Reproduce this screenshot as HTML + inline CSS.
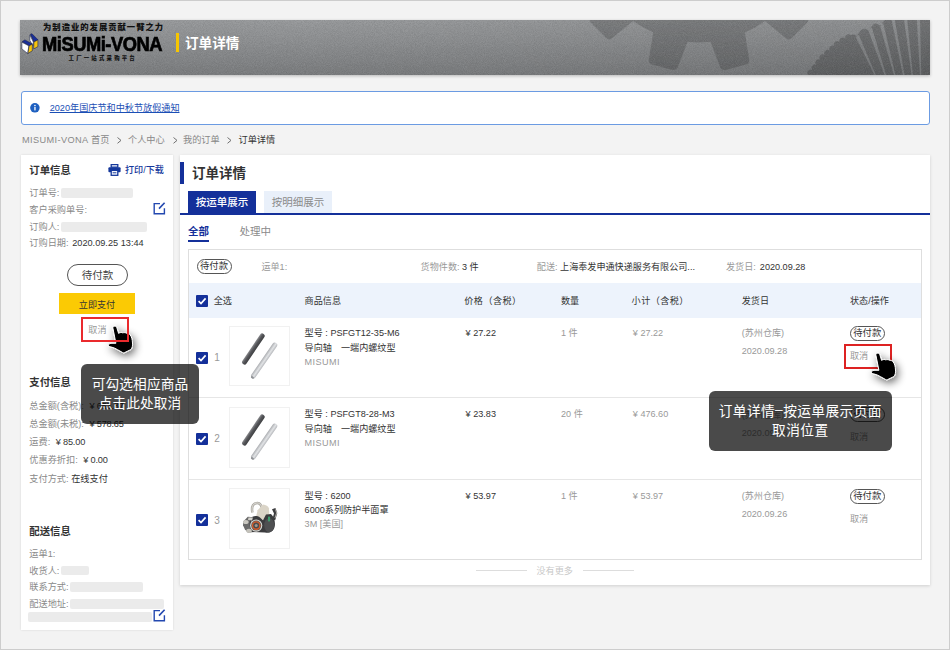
<!DOCTYPE html>
<html lang="zh-CN">
<head>
<meta charset="utf-8">
<title>订单详情</title>
<style>
*{box-sizing:border-box;margin:0;padding:0}
html,body{width:950px;height:650px;overflow:hidden;background:#f3f3f3}
body{font-family:"Liberation Sans","Noto Sans CJK SC",sans-serif;font-size:9.3px;color:#333;position:relative}
#frame{position:absolute;left:0;top:0;width:950px;height:650px;border:1px solid #cdcdcd;background:#f3f3f3}
.a{position:absolute;white-space:nowrap}
.l{font-size:1em}
/* header */
#hdr{left:20px;top:20px;width:910px;height:55px;background:linear-gradient(90deg,rgba(0,0,0,0) 30%,rgba(0,0,0,.07) 100%),linear-gradient(180deg,#97999b 0%,#8a8c8e 45%,#797b7d 100%);box-shadow:0 1px 3px rgba(0,0,0,.25);overflow:hidden}
#hdr svg{position:absolute;left:0;top:0}
.tag{left:43px;top:21.5px;font-size:8.3px;line-height:10px;font-weight:900;letter-spacing:1.02px;color:#111}
.brand{left:42px;top:32px;font-size:19.6px;line-height:24px;font-weight:700;color:#000;letter-spacing:-.5px;transform-origin:0 50%;transform:scaleX(.935);-webkit-text-stroke:.7px #000}
.sub{left:68.6px;top:53.8px;font-size:5.4px;line-height:8px;font-weight:900;letter-spacing:2.2px;color:#111}
.ybar{left:176px;top:33px;width:3px;height:19px;background:#f7c600}
.htitle{left:185px;top:33.6px;font-size:13.6px;line-height:19px;font-weight:700;color:#fff}
/* notice */
#notice{left:21px;top:91px;width:909px;height:34px;background:#fff;border:1px solid #6b9be2;border-radius:3px}
.ni{left:29.5px;top:102px;width:10px;height:10px;border-radius:50%;background:#1d5fc4}
.nlink{left:49.7px;top:101.3px;font-size:9.15px;line-height:14px;color:#1b4fb5;text-decoration:underline}
.bc{top:133px;font-size:9.2px;line-height:14px;color:#888}
/* panels */
#side{left:21px;top:155px;width:152px;height:475px;background:#fff;box-shadow:0 0 2px rgba(0,0,0,.12)}
#main{left:180px;top:155px;width:750px;height:430px;background:#fff;box-shadow:0 1px 3px rgba(0,0,0,.15)}
.h3{font-size:10.4px;line-height:14px;font-weight:700;color:#333}
.lb{font-size:9.2px;line-height:14px;color:#8a8a8a}
.v{color:#333}
.ph{background:#ebebeb;border-radius:2px}
.pill{border:1px solid #555;text-align:center;color:#444;background:#fff}

.bbar{left:180px;top:162px;width:4px;height:21.5px;background:#14309a}
.tab{top:191px;height:22.5px;width:68px;text-align:center;font-size:10.5px;line-height:22px}
.t12{font-size:9.1px;line-height:14px}
.g{color:#999}
.d{color:#333}
.cb{width:12px;height:12px;background:#14309a;border-radius:1px}
.cb svg{position:absolute;left:0;top:0}
.pbox{left:229px;width:60.5px;height:60.5px;border:1px solid #f1f1f1;background:#fff}
.spill{width:36px;height:15px;border-radius:8px;font-size:9.3px;line-height:13px;border:1px solid #555;text-align:center;color:#333;background:#fff}
.sep{left:189px;width:732px;height:1px;background:#e6e6e6}
.tip{background:rgba(0,0,0,.71);border-radius:6px;color:#fff;text-align:center;font-size:13.7px;line-height:19.2px;letter-spacing:.1px}
</style>
</head>
<body>
<div id="frame"></div>

<!-- HEADER -->
<div id="hdr" class="a">
<svg width="910" height="55" viewBox="20 20 910 55"><filter id="nz" x="0" y="0" width="100%" height="100%"><feTurbulence type="fractalNoise" baseFrequency="1.1" numOctaves="2" seed="7" result="t"/><feColorMatrix type="matrix" values="0 0 0 0 1  0 0 0 0 1  0 0 0 0 1  1.6 0 0 0 -.62"/></filter><filter id="nz2" x="0" y="0" width="100%" height="100%"><feTurbulence type="fractalNoise" baseFrequency="1.1" numOctaves="2" seed="19"/><feColorMatrix type="matrix" values="0 0 0 0 0  0 0 0 0 0  0 0 0 0 0  1.6 0 0 0 -.62"/></filter><g id="gears"><path d="M744.9 -172.6L749.2 -199.4Q749.9 -203.4 746.0 -204.4L725.5 -209.9Q721.6 -210.9 720.2 -207.2L710.5 -181.8A112.0 112.0 0 0 0 687.5 -181.8L677.8 -207.2Q676.4 -210.9 672.5 -209.9L652.0 -204.4Q648.1 -203.4 648.8 -199.4L653.1 -172.6A112.0 112.0 0 0 0 633.1 -161.1L612.0 -178.2Q608.9 -180.7 606.1 -177.9L591.1 -162.9Q588.3 -160.1 590.8 -157.0L607.9 -135.9A112.0 112.0 0 0 0 596.4 -115.9L569.6 -120.2Q565.6 -120.9 564.6 -117.0L559.1 -96.5Q558.1 -92.6 561.8 -91.2L587.2 -81.5A112.0 112.0 0 0 0 587.2 -58.5L561.8 -48.8Q558.1 -47.4 559.1 -43.5L564.6 -23.0Q565.6 -19.1 569.6 -19.8L596.4 -24.1A112.0 112.0 0 0 0 607.9 -4.1L590.8 17.0Q588.3 20.1 591.1 22.9L606.1 37.9Q608.9 40.7 612.0 38.2L633.1 21.1A112.0 112.0 0 0 0 653.1 32.6L648.8 59.4Q648.1 63.4 652.0 64.4L672.5 69.9Q676.4 70.9 677.8 67.2L687.5 41.8A112.0 112.0 0 0 0 710.5 41.8L720.2 67.2Q721.6 70.9 725.5 69.9L746.0 64.4Q749.9 63.4 749.2 59.4L744.9 32.6A112.0 112.0 0 0 0 764.9 21.1L786.0 38.2Q789.1 40.7 791.9 37.9L806.9 22.9Q809.7 20.1 807.2 17.0L790.1 -4.1A112.0 112.0 0 0 0 801.6 -24.1L828.4 -19.8Q832.4 -19.1 833.4 -23.0L838.9 -43.5Q839.9 -47.4 836.2 -48.8L810.8 -58.5A112.0 112.0 0 0 0 810.8 -81.5L836.2 -91.2Q839.9 -92.6 838.9 -96.5L833.4 -117.0Q832.4 -120.9 828.4 -120.2L801.6 -115.9A112.0 112.0 0 0 0 790.1 -135.9L807.2 -157.0Q809.7 -160.1 806.9 -162.9L791.9 -177.9Q789.1 -180.7 786.0 -178.2L764.9 -161.1A112.0 112.0 0 0 0 744.9 -172.6Z" fill="#000" fill-opacity=".165"/><path d="M807.8 76L807.8 74.8A3.35 3.35 0 0 1 812.2 70.0A3.34 3.34 0 0 1 816.5 65.1A3.35 3.35 0 0 1 820.0 59.5A3.33 3.33 0 0 1 824.7 55.0A3.35 3.35 0 0 1 829.6 50.6A3.35 3.35 0 0 1 834.4 46.2A3.33 3.33 0 0 1 839.5 42.0A3.35 3.35 0 0 1 845.1 38.6A3.35 3.35 0 0 1 850.7 35.3L850.7 35.3Q854.1 33.2 857.1 36.6L858.5 33.6Q862.9 25.5 868.9 31.2L870.6 28.2Q874.8 20.1 880.4 26.2L882.1 23.1Q884.8 18.8 887.8 19.4L887.8 19L931 19L931 76ZM855.8 36.9L858.8 34.9L875.8 75.0L874.5 75.0ZM868.6 30.9L871.8 27.5L886.1 75.0L884.6 75.0ZM880.0 25.8L883.1 22.5L895.4 75.0L893.9 75.0ZM891.5 19.3L894.7 19.3L904.5 75.0L902.9 75.0ZM904.0 19.3L907.2 19.3L912.9 75.0L911.5 75.0ZM916.8 19.3L920.0 19.3L921.3 75.0L920.0 75.0Z" fill="#000" fill-opacity=".2" fill-rule="evenodd"/></g><rect x="20" y="20" width="910" height="55" filter="url(#nz)" opacity=".10"/><rect x="20" y="20" width="910" height="55" filter="url(#nz2)" opacity=".10"/><g stroke="#141c4a" stroke-width=".55" stroke-linejoin="round"><path d="M30.5 34.2L31.9 33.7L37.9 39.7L33.9 42Z" fill="#1a2f9a"/><path d="M29.9 34.9L33.4 42.2L32.9 45.9L29.9 40.4Z" fill="#fff"/><path d="M33.9 42L37.9 39.9L37.9 46.6L33.7 49Z" fill="#f6c40c"/><path d="M22.2 41.5L24.9 39.9L32.3 43.9L29.1 45.8Z" fill="#1a2f9a"/><path d="M21.9 42.2L28.9 45.9L27.7 53.5L21.9 48.9Z" fill="#fff"/><path d="M29.1 45.9L32.3 44.1L32.3 50.8L27.9 53.5Z" fill="#f6c40c"/></g></svg>
</div>
<div class="a tag">为制造业的发展贡献一臂之力</div>
<div class="a brand">MiSUMi-VONA</div>
<div class="a sub">工厂一站式采购平台</div>
<div class="a ybar"></div>
<div class="a htitle">订单详情</div>

<!-- NOTICE -->
<div id="notice" class="a"></div>
<svg class="a" style="left:30px;top:102.5px" width="10" height="10" viewBox="0 0 10 10"><circle cx="4.9" cy="4.8" r="4.75" fill="#1e60c0"/><rect x="4.3" y="4" width="1.3" height="3.4" fill="#fff"/><circle cx="4.95" cy="2.6" r=".8" fill="#fff"/></svg>
<div class="a nlink"><span class="l">2020</span>年国庆节和中秋节放假通知</div>

<!-- BREADCRUMB -->
<div class="a bc" style="left:22px"><span class="l" style="letter-spacing:.38px">MISUMI-VONA</span> 首页</div>
<svg class="a" style="left:117.0px;top:137px" width="5" height="7" viewBox="0 0 5 7"><path d="M.5 .5L4 3.4L.5 6.3" fill="none" stroke="#707070" stroke-width="1"/></svg>
<div class="a bc" style="left:128px">个人中心</div>
<svg class="a" style="left:172.8px;top:137px" width="5" height="7" viewBox="0 0 5 7"><path d="M.5 .5L4 3.4L.5 6.3" fill="none" stroke="#707070" stroke-width="1"/></svg>
<div class="a bc" style="left:183px">我的订单</div>
<svg class="a" style="left:227.4px;top:137px" width="5" height="7" viewBox="0 0 5 7"><path d="M.5 .5L4 3.4L.5 6.3" fill="none" stroke="#707070" stroke-width="1"/></svg>
<div class="a bc" style="left:238.5px;color:#333">订单详情</div>

<!-- PANELS -->
<div id="side" class="a"></div>
<div id="main" class="a"></div>


<!-- SIDEBAR CONTENT -->
<div class="a h3" style="left:29.3px;top:163.5px">订单信息</div>
<svg class="a" style="left:108px;top:164px" width="13" height="12" viewBox="0 0 13 12"><path d="M3.2 0.6h6.6v2.6H3.2z" fill="none" stroke="#15389c" stroke-width="1.3"/><rect x="0.4" y="3.2" width="12.2" height="5" rx="1" fill="#15389c"/><rect x="3.2" y="6.4" width="6.6" height="4.9" fill="#fff" stroke="#15389c" stroke-width="1.3"/><rect x="4.6" y="8.3" width="3.8" height="1" fill="#15389c"/></svg>
<div class="a" style="left:125px;top:163px;font-size:9.1px;line-height:14px;color:#15389c;font-weight:500">打印/下载</div>

<div class="a lb" style="left:29.3px;top:186px">订单号:</div>
<div class="a ph" style="left:61px;top:188px;width:72px;height:10px"></div>
<div class="a lb" style="left:29.3px;top:203px">客户采购单号:</div>
<svg class="a edit" style="left:152.5px;top:202px" width="13" height="13" viewBox="0 0 13 13"><path d="M7 1.6H1.2v10.2h10.2V6.2" fill="none" stroke="#2348b0" stroke-width="1.4"/><path d="M11.6 0.8L6 6.6" fill="none" stroke="#2348b0" stroke-width="1.6"/></svg>
<div class="a lb" style="left:29.3px;top:220px">订购人:</div>
<div class="a ph" style="left:61px;top:222px;width:86px;height:10px"></div>
<div class="a lb" style="left:29.3px;top:236px">订购日期: <span class="v" style="margin-left:1px"><span class="l">2020.09.25 13:44</span></span></div>

<div class="a pill" style="left:67px;top:264px;width:61px;height:22px;border-radius:11px;font-size:10.5px;line-height:20px">待付款</div>
<div class="a" style="left:59px;top:293px;width:76px;height:21px;background:#fbca04;text-align:center;font-size:9.1px;line-height:24.5px;color:#333">立即支付</div>
<div class="a" style="left:88.3px;top:322.5px;font-size:9.1px;line-height:14px;color:#999">取消</div>

<div class="a h3" style="left:29.3px;top:375.5px">支付信息</div>
<div class="a lb" style="left:29.3px;top:399px">总金额(含税): <span class="v" style="margin-left:3px;letter-spacing:-.2px"><span class="l">¥ 653.87</span></span></div>
<div class="a lb" style="left:29.3px;top:416.6px">总金额(未税): <span class="v" style="margin-left:3px;letter-spacing:-.2px"><span class="l">¥ 578.65</span></span></div>
<div class="a lb" style="left:29.3px;top:435px">运费: <span class="v" style="margin-left:3px;letter-spacing:-.2px"><span class="l">¥ 85.00</span></span></div>
<div class="a lb" style="left:29.3px;top:453px">优惠券折扣: <span class="v" style="margin-left:3px;letter-spacing:-.2px"><span class="l">¥ 0.00</span></span></div>
<div class="a lb" style="left:29.3px;top:471.6px">支付方式: <span class="v">在线支付</span></div>

<div class="a h3" style="left:29.3px;top:524.5px">配送信息</div>
<div class="a lb" style="left:29.3px;top:547px">运单1:</div>
<div class="a lb" style="left:29.3px;top:563.6px">收货人:</div>
<div class="a ph" style="left:61.4px;top:566.4px;width:27.6px;height:9px"></div>
<div class="a lb" style="left:29.3px;top:580px">联系方式:</div>
<div class="a ph" style="left:70.4px;top:582.4px;width:72.6px;height:9.2px"></div>
<div class="a lb" style="left:29.3px;top:596.6px">配送地址:</div>
<div class="a ph" style="left:70.4px;top:599px;width:93.6px;height:9.6px"></div>
<div class="a ph" style="left:28px;top:612.4px;width:124px;height:9.2px"></div>
<svg class="a edit" style="left:153px;top:609px" width="13" height="13" viewBox="0 0 13 13"><path d="M7 1.6H1.2v10.2h10.2V6.2" fill="none" stroke="#2348b0" stroke-width="1.4"/><path d="M11.6 0.8L6 6.6" fill="none" stroke="#2348b0" stroke-width="1.6"/></svg>


<!-- MAIN CONTENT -->
<div class="a bbar"></div>
<div class="a" style="left:192px;top:164px;font-size:13.5px;line-height:19px;font-weight:700;color:#333">订单详情</div>
<div class="a tab" style="left:188px;background:#14309a;color:#fff;font-weight:500">按运单展示</div>
<div class="a tab" style="left:264px;background:#e9f0fa;color:#8a8a8a;height:21.5px">按明细展示</div>
<div class="a" style="left:180px;top:213.2px;width:750px;height:1.9px;background:#14309a"></div>
<div class="a" style="left:188px;top:224px;font-size:10.5px;line-height:15px;font-weight:700;color:#14309a">全部</div>
<div class="a" style="left:188px;top:239.5px;width:21px;height:2px;background:#14309a"></div>
<div class="a" style="left:239.4px;top:224px;font-size:10.5px;line-height:15px;color:#8a8a8a">处理中</div>

<div class="a" style="left:188px;top:249px;width:733.5px;height:311px;border:1px solid #dedede;background:#fff"></div>
<div class="a spill" style="left:196.5px;top:259px;width:35px">待付款</div>
<div class="a t12 g" style="left:261.4px;top:260px">运单1:</div>
<div class="a t12 g" style="left:420.6px;top:260px">货物件数: <span class="d"><span class="l">3</span> 件</span></div>
<div class="a t12 g" style="left:536.8px;top:260px">配送: <span class="d">上海奉发申通快递服务有限公司...</span></div>
<div class="a t12 g" style="left:726px;top:260px">发货日: <span class="d" style="margin-left:1.5px"><span class="l">2020.09.28</span></span></div>

<div class="a" style="left:189px;top:283px;width:731.5px;height:35px;background:#edf3fc"></div>
<div class="a cb" style="left:195.7px;top:295px"><svg width="12" height="12" viewBox="0 0 12 12"><path d="M2.6 6.2l2.4 2.4 4.6-5.2" fill="none" stroke="#fff" stroke-width="1.7"/></svg></div>
<div class="a t12 d" style="left:213.7px;top:294px">全选</div>
<div class="a t12 d" style="left:304.6px;top:294px">商品信息</div>
<div class="a t12 d" style="left:464.3px;top:294px;letter-spacing:.45px">价格（含税）</div>
<div class="a t12 d" style="left:561px;top:294px">数量</div>
<div class="a t12 d" style="left:631.6px;top:294px;letter-spacing:.45px">小计（含税）</div>
<div class="a t12 d" style="left:741.7px;top:294px">发货日</div>
<div class="a t12 d" style="left:850px;top:294px">状态/操作</div>

<div class="a cb" style="left:195.7px;top:351.7px"><svg width="12" height="12" viewBox="0 0 12 12"><path d="M2.6 6.2l2.4 2.4 4.6-5.2" fill="none" stroke="#fff" stroke-width="1.7"/></svg></div>
<div class="a t12 g" style="left:214.2px;top:351.0px;font-size:10px"><span class="l">1</span></div>
<div class="a pbox" style="top:325.7px"><svg width="58" height="58" viewBox="0 0 58 58" style="position:absolute;left:0;top:0;filter:blur(.35px)"><g transform="translate(32.7 8.2) rotate(124.12)"><rect x="-1.6" y="-2.45" width="36.5" height="4.9" rx="2.45" fill="url(#gd)"/></g><g transform="translate(45.3 17.3) rotate(124.62)"><rect x="-1.6" y="-2.45" width="42.5" height="4.9" rx="2.45" fill="url(#gl)"/><ellipse cx="40.3" cy="0" rx="1.1" ry="1.7" fill="#8e9094"/></g></svg></div>
<div class="a t12 d" style="left:304.6px;top:326.0px">型号 : <span class="l">PSFGT12-35-M6</span></div>
<div class="a t12 d" style="left:304.6px;top:340.7px">导向轴　一端内螺纹型</div>
<div class="a t12 g" style="left:304.6px;top:354.7px"><span class="l" style="letter-spacing:.4px">MISUMI</span></div>
<div class="a t12 d" style="left:465.6px;top:326.0px"><span class="l">¥ 27.22</span></div>
<div class="a t12 g" style="left:561px;top:326.0px"><span class="l">1</span> 件</div>
<div class="a t12 g" style="left:632.8px;top:326.0px"><span class="l">¥ 27.22</span></div>
<div class="a t12 g" style="left:741.7px;top:326.4px">(苏州仓库)</div>
<div class="a t12 g" style="left:741.7px;top:344.4px"><span class="l">2020.09.28</span></div>
<div class="a spill" style="left:849.5px;top:326.0px;width:35.5px">待付款</div>
<div class="a t12 g" style="left:850px;top:349.0px">取消</div>
<div class="a sep" style="top:397.3px"></div>

<div class="a cb" style="left:195.7px;top:433.0px"><svg width="12" height="12" viewBox="0 0 12 12"><path d="M2.6 6.2l2.4 2.4 4.6-5.2" fill="none" stroke="#fff" stroke-width="1.7"/></svg></div>
<div class="a t12 g" style="left:214.2px;top:432.3px;font-size:10px"><span class="l">2</span></div>
<div class="a pbox" style="top:407.0px"><svg width="58" height="58" viewBox="0 0 58 58" style="position:absolute;left:0;top:0;filter:blur(.35px)"><g transform="translate(32.7 8.2) rotate(124.12)"><rect x="-1.6" y="-2.45" width="36.5" height="4.9" rx="2.45" fill="url(#gd)"/></g><g transform="translate(45.3 17.3) rotate(124.62)"><rect x="-1.6" y="-2.45" width="42.5" height="4.9" rx="2.45" fill="url(#gl)"/><ellipse cx="40.3" cy="0" rx="1.1" ry="1.7" fill="#8e9094"/></g></svg></div>
<div class="a t12 d" style="left:304.6px;top:407.3px">型号 : <span class="l">PSFGT8-28-M3</span></div>
<div class="a t12 d" style="left:304.6px;top:422.0px">导向轴　一端内螺纹型</div>
<div class="a t12 g" style="left:304.6px;top:436.0px"><span class="l" style="letter-spacing:.4px">MISUMI</span></div>
<div class="a t12 d" style="left:465.6px;top:407.3px"><span class="l">¥ 23.83</span></div>
<div class="a t12 g" style="left:561px;top:407.3px"><span class="l">20</span> 件</div>
<div class="a t12 g" style="left:632.8px;top:407.3px"><span class="l">¥ 476.60</span></div>
<div class="a t12 g" style="left:741.7px;top:407.7px">(苏州仓库)</div>
<div class="a t12 g" style="left:741.7px;top:425.7px"><span class="l">2020.09.28</span></div>
<div class="a spill" style="left:849.5px;top:407.3px;width:35.5px">待付款</div>
<div class="a t12 g" style="left:850px;top:430.3px">取消</div>
<div class="a sep" style="top:478.6px"></div>

<div class="a cb" style="left:195.7px;top:514.3000000000001px"><svg width="12" height="12" viewBox="0 0 12 12"><path d="M2.6 6.2l2.4 2.4 4.6-5.2" fill="none" stroke="#fff" stroke-width="1.7"/></svg></div>
<div class="a t12 g" style="left:214.2px;top:513.6px;font-size:10px"><span class="l">3</span></div>
<div class="a pbox" style="top:488.3px"><svg width="58" height="58" viewBox="0 0 58 58" style="position:absolute;left:0;top:0;filter:blur(.5px)"><path d="M22.400 23.500C21 16.800 23.800 13.900 27.400 14C30.600 14.200 31.800 17 32.200 20.800" fill="none" stroke="#a9a7a0" stroke-width="2.500"/><path d="M22.400 23.500C21 16.800 23.800 13.900 27.400 14C30.600 14.200 31.800 17 32.200 20.800" fill="none" stroke="#e4e2dc" stroke-width=".9"/><path d="M27.600 21.200L33 15.600C36 15.900 38.200 17.400 38.900 19.200L39.300 24.600L33.200 31L26.300 26.800Z" fill="#dad4c7"/><path d="M42 20.200L45.400 19L47.300 24L45.200 31.200L42.300 30.200L44 24.600Z" fill="#3d3d3f"/><path d="M45.600 20.500L46.600 24L45 29" fill="none" stroke="#c9c7c0" stroke-width=".8"/><path d="M13.300 32.500L17.800 27.800L24 28.200L24 43L18 43.700L14.800 40.200L13 36.200Z" fill="#6a6a6a"/><path d="M20.200 30.200C22 26.700 27 26.200 30 28.600L33 31.200L36 25.600L41 25C44.200 28 45.700 33 44.600 38C43.600 42.600 39 44.600 35 43.600L22.200 43C19.600 40 19 34.200 20.200 30.200Z" fill="#3b3c3e"/><ellipse cx="39.200" cy="36.200" rx="5" ry="7" fill="#4e4f51"/><rect x="38" y="27.600" width="2.100" height="4.800" fill="#3c9a6c"/><circle cx="26.200" cy="36.600" r="6.100" fill="#dddbd5"/><circle cx="26.200" cy="36.600" r="5" fill="#5a5a5a"/><circle cx="26.200" cy="36.600" r="4.300" fill="#d65a28"/><circle cx="26.200" cy="36.600" r="3" fill="#4c4c4c"/><circle cx="26.200" cy="36.600" r="1.500" fill="#9a9894"/><ellipse cx="15.800" cy="33" rx="2.800" ry="2" fill="#c9c7c0"/><ellipse cx="19" cy="41.800" rx="2.800" ry="2.100" fill="#c4c2bb"/><path d="M18.500 28.500L23 28.500L22 31.500L18 31Z" fill="#d2d0ca"/></svg></div>
<div class="a t12 d" style="left:304.6px;top:488.6px">型号 : <span class="l">6200</span></div>
<div class="a t12 d" style="left:304.6px;top:503.3px"><span class="l">6000</span>系列防护半面罩</div>
<div class="a t12 g" style="left:304.6px;top:517.3px"><span class="l">3M</span> [美国]</div>
<div class="a t12 d" style="left:465.6px;top:488.6px"><span class="l">¥ 53.97</span></div>
<div class="a t12 g" style="left:561px;top:488.6px"><span class="l">1</span> 件</div>
<div class="a t12 g" style="left:632.8px;top:488.6px"><span class="l">¥ 53.97</span></div>
<div class="a t12 g" style="left:741.7px;top:489.0px">(苏州仓库)</div>
<div class="a t12 g" style="left:741.7px;top:507.0px"><span class="l">2020.09.26</span></div>
<div class="a spill" style="left:849.5px;top:488.6px;width:35.5px">待付款</div>
<div class="a t12 g" style="left:850px;top:511.6px">取消</div>

<div class="a" style="left:476px;top:570.3px;width:51px;height:1px;background:#ddd"></div>
<div class="a" style="left:583px;top:570.3px;width:50.5px;height:1px;background:#ddd"></div>
<div class="a t12" style="left:536.5px;top:564px;color:#c8c8c8">没有更多</div>


<!-- OVERLAYS -->
<div class="a tip" style="left:81px;top:364px;width:118px;height:59.5px;padding-top:10.5px">可勾选相应商品<br>点击此处取消</div>
<div class="a tip" style="left:709px;top:391.3px;width:182.6px;height:59.5px;padding-top:10.3px;letter-spacing:.42px">订单详情<span style="position:relative;top:-1.2px">–</span>按运单展示页面<br>取消位置</div>
<svg class="a hand" style="left:98px;top:316px" width="50" height="50" viewBox="98 316 50 50"><path filter="url(#hs)" fill="#000" stroke="#fff" stroke-width="1" stroke-linejoin="round" d="M114.4 326.2C115.6 326 116.4 326.6 116.8 327.6L118.6 333.4C119.8 332.4 121.8 332.2 122.8 332.9C124 332.3 126 332.6 126.8 333.4C128.2 333.2 129.6 334 130.2 335C131.6 336.6 132.3 339.5 132.5 343C132.7 345.5 132.2 347.8 131.2 349.4L124.6 352.6C123.8 353 123.2 352.9 122.4 352.4L117.4 349.6C115.5 348.4 113 347.3 110.5 346.8C108.900 346.5 108 345.6 108.6 344.6C109.2 343.6 110.6 343.3 112 343.3L115.9 343.3L113 328.6C112.6 327.2 113.2 326.4 114.4 326.2Z"/></svg>
<div class="a" style="left:844px;top:344px;width:48px;height:25px;border:2px solid #dd2222"></div>
<svg class="a hand" style="left:861px;top:343px" width="50" height="50" viewBox="98 316 50 50"><path filter="url(#hs)" fill="#000" stroke="#fff" stroke-width="1" stroke-linejoin="round" d="M114.4 326.2C115.6 326 116.4 326.6 116.8 327.6L118.6 333.4C119.8 332.4 121.8 332.2 122.8 332.9C124 332.3 126 332.6 126.8 333.4C128.2 333.2 129.6 334 130.2 335C131.6 336.6 132.3 339.5 132.5 343C132.7 345.5 132.2 347.8 131.2 349.4L124.6 352.6C123.8 353 123.2 352.9 122.4 352.4L117.4 349.6C115.5 348.4 113 347.3 110.5 346.8C108.900 346.5 108 345.6 108.6 344.6C109.2 343.6 110.6 343.3 112 343.3L115.9 343.3L113 328.6C112.6 327.2 113.2 326.4 114.4 326.2Z"/></svg>
<div class="a" style="left:81px;top:317px;width:48px;height:25px;border:2px solid #ea2a2d"></div>
<svg width="0" height="0" style="position:absolute"><defs><linearGradient id="gd" x1="0" y1="0" x2="0" y2="1"><stop offset="0" stop-color="#3f4042"/><stop offset=".55" stop-color="#55565a"/><stop offset="1" stop-color="#8a8b8e"/></linearGradient><linearGradient id="gl" x1="0" y1="0" x2="0" y2="1"><stop offset="0" stop-color="#b6b8bc"/><stop offset=".45" stop-color="#e2e4e6"/><stop offset="1" stop-color="#abadb1"/></linearGradient>
<filter id="hs" x="-50%" y="-50%" width="220%" height="220%"><feGaussianBlur in="SourceAlpha" stdDeviation="4.2"/><feOffset dx="2" dy="3"/><feComponentTransfer><feFuncA type="linear" slope=".6"/></feComponentTransfer><feMerge><feMergeNode/><feMergeNode in="SourceGraphic"/></feMerge></filter>

</defs></svg>

</body>
</html>
